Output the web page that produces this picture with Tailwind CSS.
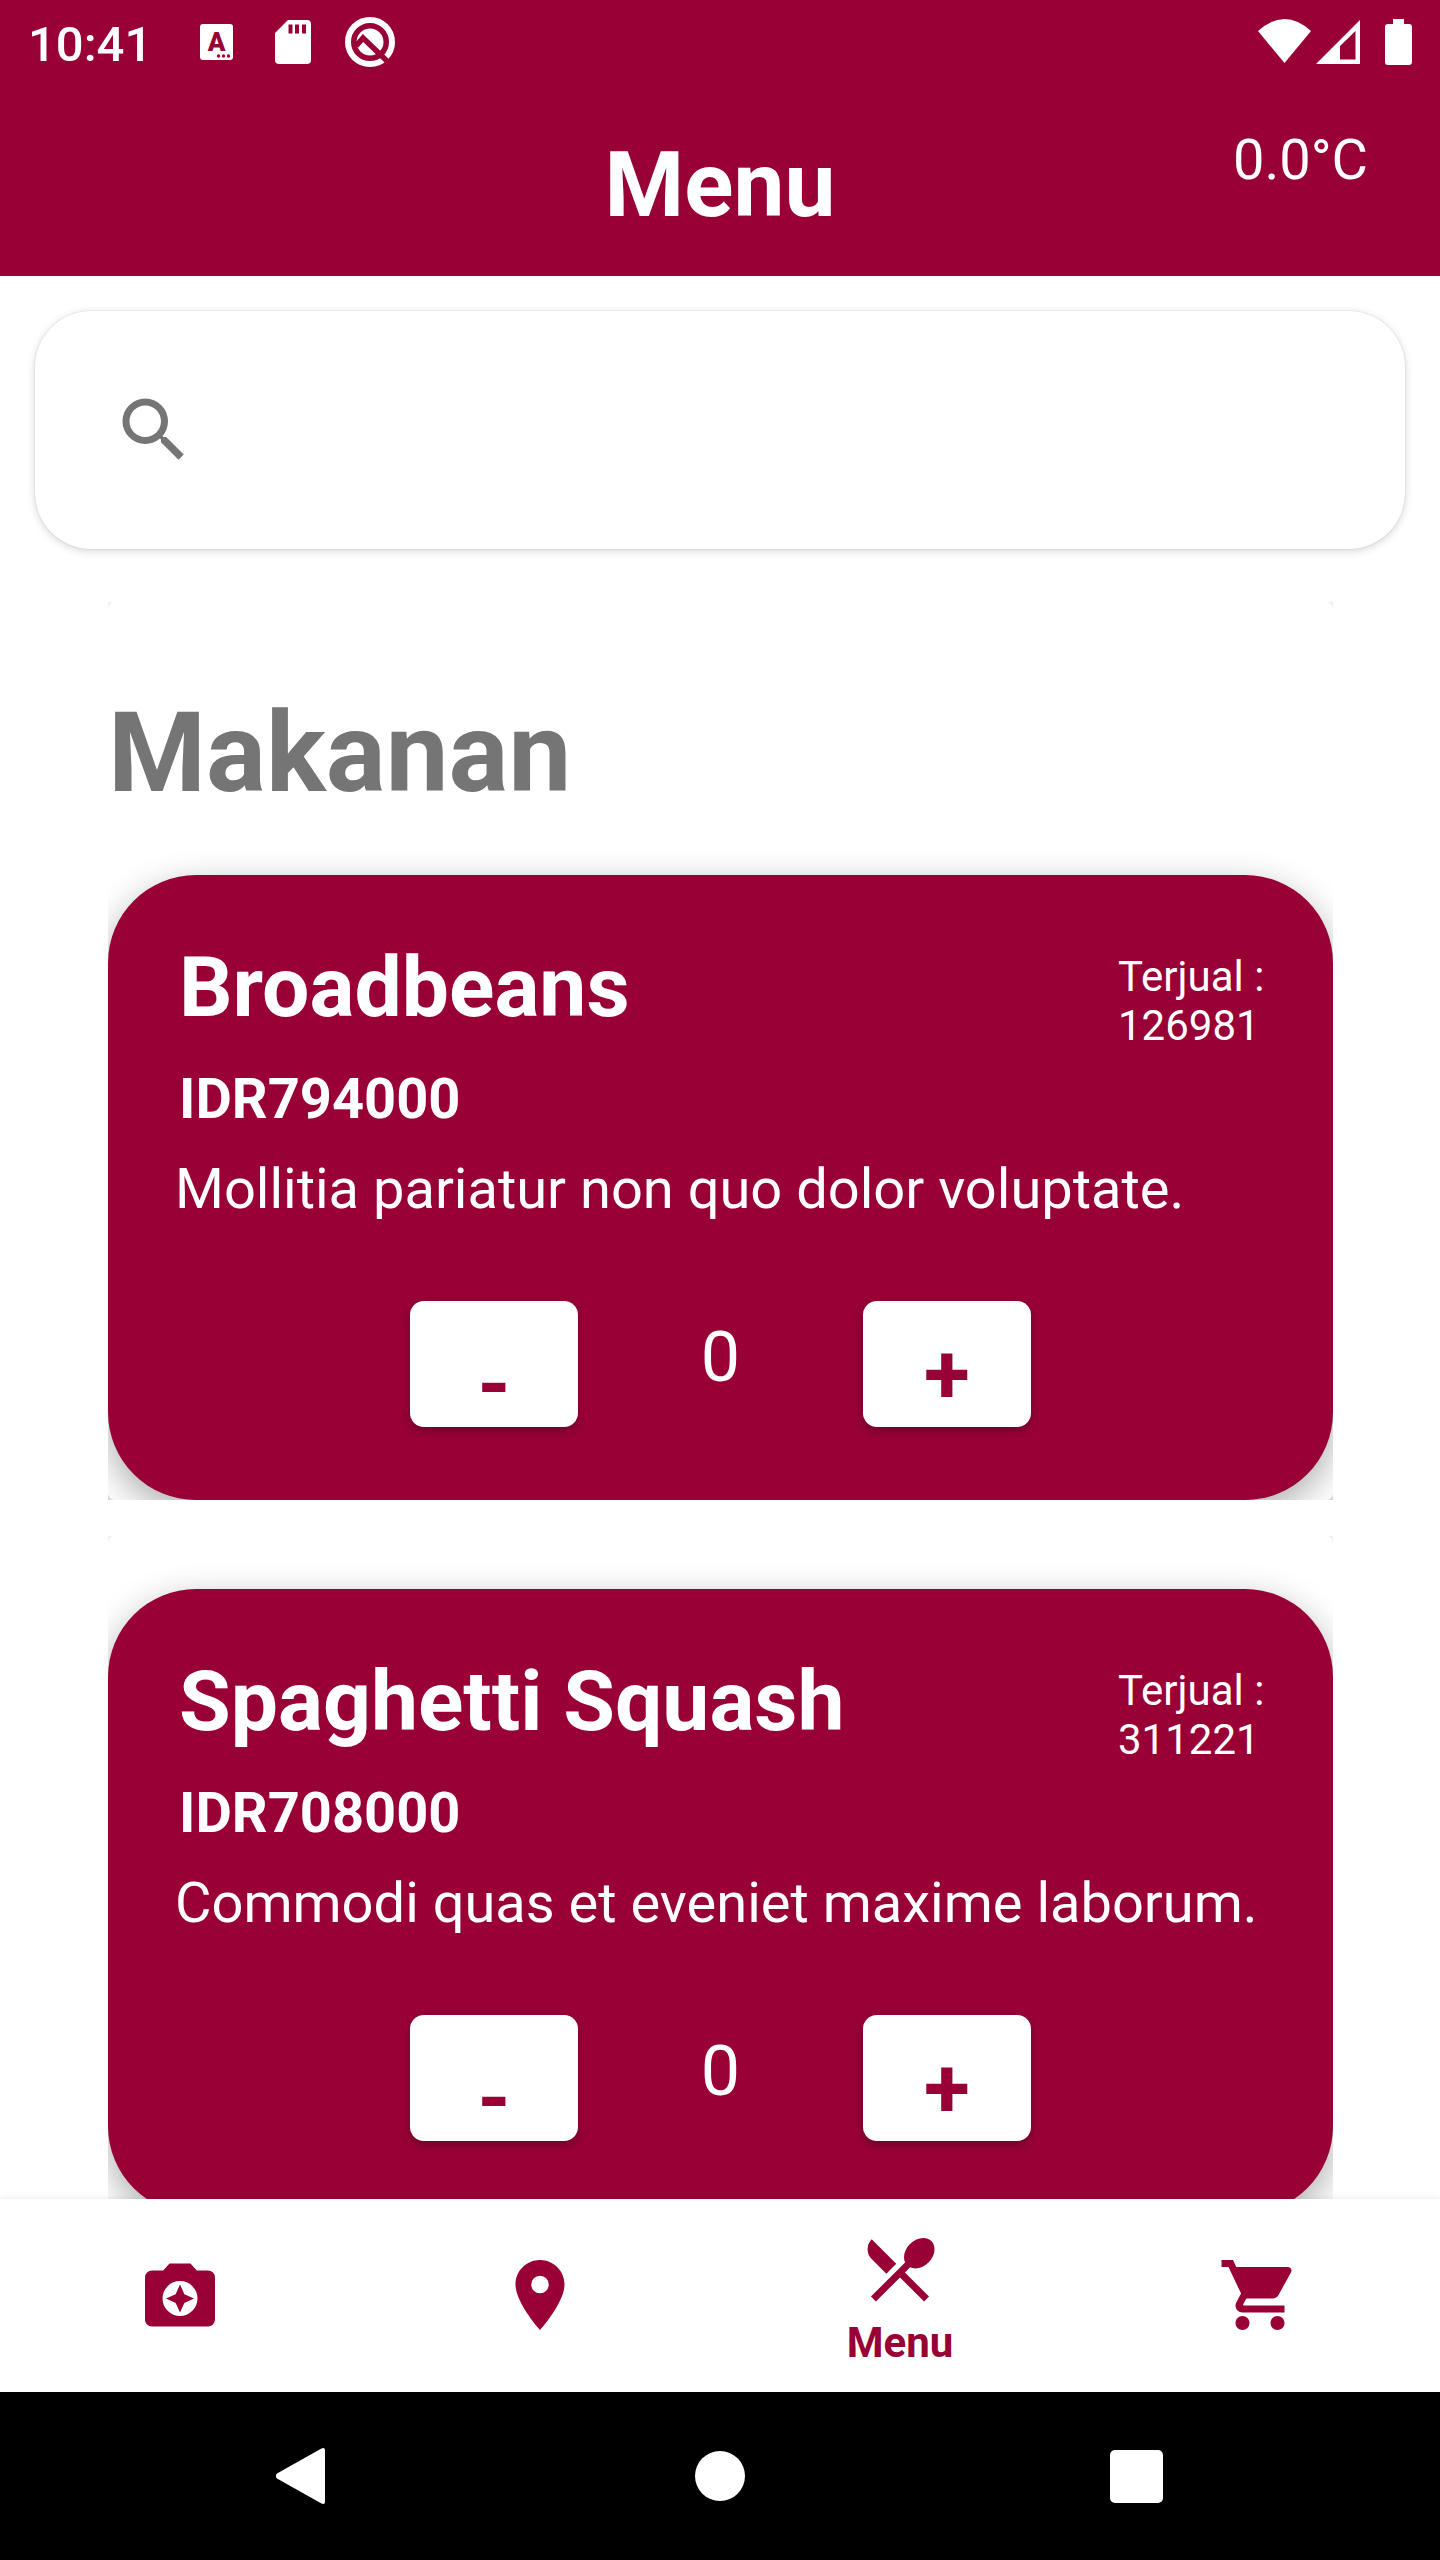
<!DOCTYPE html>
<html lang="id">
<head>
<meta charset="utf-8">
<meta name="viewport" content="width=device-width, initial-scale=1">
<title>Menu</title>
<script src="https://cdn.jsdelivr.net/npm/@tailwindcss/browser@4"></script>
</head>
<body class="flex h-screen flex-col bg-white font-['Roboto',sans-serif] text-white">

  <!-- Status bar -->
  <div class="flex h-[84px] shrink-0 items-center justify-between bg-[#980036] pl-7 pr-7">
    <div class="flex items-center">
      <span class="pt-1 text-[49px] leading-[57px] font-medium">10:41</span>
      <svg class="ml-12 h-9 w-[33px]" viewBox="0 0 33 36" aria-hidden="true">
        <rect width="33" height="36" rx="3" fill="#fff"/>
        <text x="16.5" y="27" text-anchor="middle" font-family="Roboto" font-weight="900" font-size="26" fill="#980036">A</text>
        <g fill="#980036"><circle cx="18.500" cy="32" r="1.700"/><circle cx="23.500" cy="32" r="1.700"/><circle cx="28.500" cy="32" r="1.700"/></g>
      </svg>
      <svg class="ml-[42px] h-11 w-9" viewBox="0 0 36 44" aria-hidden="true">
        <path fill="#fff" d="M32 0H13L0 13v27a4 4 0 0 0 4 4h28a4 4 0 0 0 4-4V4a4 4 0 0 0-4-4z"/>
        <path fill="#980036" d="M13.500 4.500h4v9h-4zM20 4.500h4v9h-4zM27 4.500h4v9h-4z"/>
      </svg>
      <svg class="ml-[34px] h-[50px] w-[50px]" viewBox="0 0 50 50" aria-hidden="true">
        <circle cx="25" cy="25" r="22" fill="none" stroke="#fff" stroke-width="6"/>
        <circle cx="25" cy="25" r="13.500" fill="#fff"/>
        <path d="M11 29l7-8 25 24" fill="none" stroke="#980036" stroke-width="5.500"/>
      </svg>
    </div>
    <svg class="h-[46px] w-[154px]" viewBox="0 0 154 46" fill="#fff" aria-hidden="true">
      <path d="M0 12Q26.500-12 53 12L26.500 44z"/>
      <path fill-rule="evenodd" d="M58 45L102 1v44zM82 27v13.500h15.500V12z"/>
      <path d="M135 0h11v5h5a3 3 0 0 1 3 3v35a3 3 0 0 1-3 3h-21a3 3 0 0 1-3-3V8a3 3 0 0 1 3-3h5z"/>
    </svg>
  </div>

  <header class="grid h-48 shrink-0 grid-cols-3 items-start bg-[#980036] pt-[43px]">
    <h1 class="col-start-2 pt-1.5 text-center text-[91px] leading-[105px] font-bold">Menu</h1>
    <p class="pr-[72px] text-right text-[56px] leading-[66px]">0.0°C</p>
  </header>

  <main class="min-h-0 flex-1 overflow-y-auto pt-[35px] [scrollbar-width:none]">
    <label class="mx-[35px] flex h-[238px] items-center rounded-[56px] bg-white pr-14 pl-[77px] shadow-[0_2px_8px_rgba(0,0,0,0.16),0_0_2px_rgba(0,0,0,0.14)]">
      <svg class="h-[84px] w-[84px] shrink-0 text-[#757575]" viewBox="0 0 24 24" fill="currentColor" aria-hidden="true">
        <path d="M15.500 14h-.79l-.28-.27A6.471 6.471 0 0 0 16 9.500 6.500 6.500 0 1 0 9.500 16c1.610 0 3.090-.59 4.230-1.570l.27.28v.79l5 4.990L20.490 19l-4.990-5zm-6 0C7.010 14 5 11.990 5 9.500S7.010 5 9.500 5 14 7.010 14 9.500 11.990 14 9.500 14z"/>
      </svg>
      <input type="search" aria-label="Cari menu" class="h-full min-w-0 flex-1 bg-transparent px-4 text-[56px] text-[#757575] outline-none">
    </label>

    <div class="mr-[107px] ml-[108px] mt-[53px] bg-linear-to-b from-[#f0f0f0] to-[#d8d8d8]">
      <section class="overflow-hidden rounded-[7px] bg-white pt-[85px]">
        <h2 class="text-[112px] leading-[131px] font-bold text-[#757575]">Makanan</h2>
        <article class="mt-[57px] rounded-[88px] bg-[#980036] px-[67px] pt-16 pb-[73px] shadow-[0_12px_36px_rgba(0,0,0,0.32)]">
          <div class="flex items-start justify-between pl-1">
            <h3 class="text-[84px] leading-[98px] font-bold">Broadbeans</h3>
            <p class="mt-[13px] mr-1 w-[144px] text-[42px] leading-[49px] whitespace-nowrap">Terjual :<br>126981</p>
          </div>
          <p class="mt-4 pl-1 text-[56px] leading-[66px] font-bold">IDR794000</p>
          <p class="mt-6 text-[56px] leading-[66px]">Mollitia pariatur non quo dolor voluptate.</p>
          <div class="mt-[79px] flex justify-center gap-[84px]">
            <button type="button" aria-label="Kurangi" class="h-[126px] w-[168px] rounded-[14px] bg-white pt-[42px] text-[84px] leading-[84px] font-bold text-[#980036] shadow-[0_4px_8px_rgba(0,0,0,0.25)]">-</button>
            <output class="w-[117px] text-center text-[70px] leading-[112px]">0</output>
            <button type="button" aria-label="Tambah" class="h-[126px] w-[168px] rounded-[14px] bg-white pt-[22px] text-[84px] leading-[84px] font-bold text-[#980036] shadow-[0_4px_8px_rgba(0,0,0,0.25)]">+</button>
          </div>
        </article>
      </section>
    </div>

    <div class="mr-[107px] ml-[108px] mt-9 bg-linear-to-b from-[#f0f0f0] to-[#d8d8d8]">
      <section class="overflow-hidden rounded-[7px] bg-white pt-[53px]">
        <article class="rounded-[88px] bg-[#980036] px-[67px] pt-16 pb-[73px] shadow-[0_12px_36px_rgba(0,0,0,0.32)]">
          <div class="flex items-start justify-between pl-1">
            <h3 class="text-[84px] leading-[98px] font-bold">Spaghetti Squash</h3>
            <p class="mt-[13px] mr-1 w-[144px] text-[42px] leading-[49px] whitespace-nowrap">Terjual :<br>311221</p>
          </div>
          <p class="mt-4 pl-1 text-[56px] leading-[66px] font-bold">IDR708000</p>
          <p class="mt-6 text-[56px] leading-[66px]">Commodi quas et eveniet maxime laborum.</p>
          <div class="mt-[79px] flex justify-center gap-[84px]">
            <button type="button" aria-label="Kurangi" class="h-[126px] w-[168px] rounded-[14px] bg-white pt-[42px] text-[84px] leading-[84px] font-bold text-[#980036] shadow-[0_4px_8px_rgba(0,0,0,0.25)]">-</button>
            <output class="w-[117px] text-center text-[70px] leading-[112px]">0</output>
            <button type="button" aria-label="Tambah" class="h-[126px] w-[168px] rounded-[14px] bg-white pt-[22px] text-[84px] leading-[84px] font-bold text-[#980036] shadow-[0_4px_8px_rgba(0,0,0,0.25)]">+</button>
          </div>
        </article>
      </section>
    </div>
  </main>

  <!-- Bottom navigation -->
  <nav class="relative grid h-[193px] shrink-0 grid-cols-4 bg-white pb-0.5 text-[#980036] shadow-[0_0_6px_rgba(0,0,0,0.1)]">
    <a href="#" aria-label="Kamera" class="flex items-center justify-center">
      <svg class="h-[84px] w-[84px]" viewBox="0 0 24 24" fill="currentColor" aria-hidden="true">
        <path d="M20 5h-3.200L15 3H9L7.200 5H4a2 2 0 0 0-2 2v12c0 1.100.9 2 2 2h16a2 2 0 0 0 2-2V7a2 2 0 0 0-2-2zm-8 13a5 5 0 1 1 0-10 5 5 0 0 1 0 10z"/>
        <path d="M12 17l1.250-2.750L16 13l-2.750-1.250L12 9l-1.250 2.750L8 13l2.750 1.250z"/>
      </svg>
    </a>
    <a href="#" aria-label="Lokasi" class="flex items-center justify-center">
      <svg class="h-[84px] w-[84px]" viewBox="0 0 24 24" fill="currentColor" aria-hidden="true">
        <path d="M12 2C8.130 2 5 5.130 5 9c0 5.250 7 13 7 13s7-7.750 7-13c0-3.870-3.130-7-7-7zm0 9.500a2.500 2.500 0 0 1 0-5 2.500 2.500 0 0 1 0 5z"/>
      </svg>
    </a>
    <a href="#" aria-current="page" class="flex flex-col items-center pt-7">
      <svg class="h-[84px] w-[84px]" viewBox="0 0 24 24" fill="currentColor" aria-hidden="true">
        <path d="M8.100 13.340l2.830-2.830L3.910 3.500a4.008 4.008 0 0 0 0 5.660l4.190 4.180zm6.780-1.810c1.530.71 3.680.21 5.270-1.380 1.910-1.910 2.280-4.650.81-6.120-1.460-1.460-4.200-1.100-6.120.81-1.590 1.590-2.090 3.740-1.380 5.270L3.700 19.870l1.410 1.410L12 14.410l6.880 6.880 1.410-1.410L13.410 13l1.470-1.470z"/>
      </svg>
      <span class="mt-[7px] text-[42px] leading-[49px] font-bold">Menu</span>
    </a>
    <a href="#" aria-label="Keranjang" class="flex items-center justify-center">
      <svg class="h-[84px] w-[84px]" viewBox="0 0 24 24" fill="currentColor" aria-hidden="true">
        <path d="M7 18c-1.100 0-1.990.9-1.990 2S5.900 22 7 22s2-.9 2-2-.9-2-2-2zM1 2v2h2l3.600 7.590-1.350 2.450c-.16.28-.25.61-.25.96 0 1.100.9 2 2 2h12v-2H7.420c-.14 0-.25-.11-.25-.25l.03-.12.9-1.630h7.450c.75 0 1.410-.41 1.750-1.030l3.580-6.490A1.003 1.003 0 0 0 20 4H5.210l-.94-2H1zm16 16c-1.100 0-1.990.9-1.990 2s.89 2 1.990 2 2-.9 2-2-.9-2-2-2z"/>
      </svg>
    </a>
  </nav>

  <!-- System navigation -->
  <div class="relative flex h-[168px] shrink-0 justify-center bg-black">
    <div class="flex w-full max-w-[1248px]">
      <button type="button" aria-label="Kembali" class="flex flex-1 items-center justify-center">
        <svg class="h-14 w-14" viewBox="0 0 56 56" fill="#fff" aria-hidden="true"><path d="M1 25.500L45 .8q4-2.200 4 2.200v50q0 4.400-4 2.200L1 30.500q-2.500-2.500 0-5z"/></svg>
      </button>
      <button type="button" aria-label="Beranda" class="flex flex-1 items-center justify-center">
        <span class="h-[50px] w-[50px] rounded-full bg-white"></span>
      </button>
      <button type="button" aria-label="Aplikasi terbaru" class="flex flex-1 items-center justify-center">
        <span class="h-[53px] w-[53px] rounded-[5px] bg-white"></span>
      </button>
    </div>
  </div>
</body>
</html>
